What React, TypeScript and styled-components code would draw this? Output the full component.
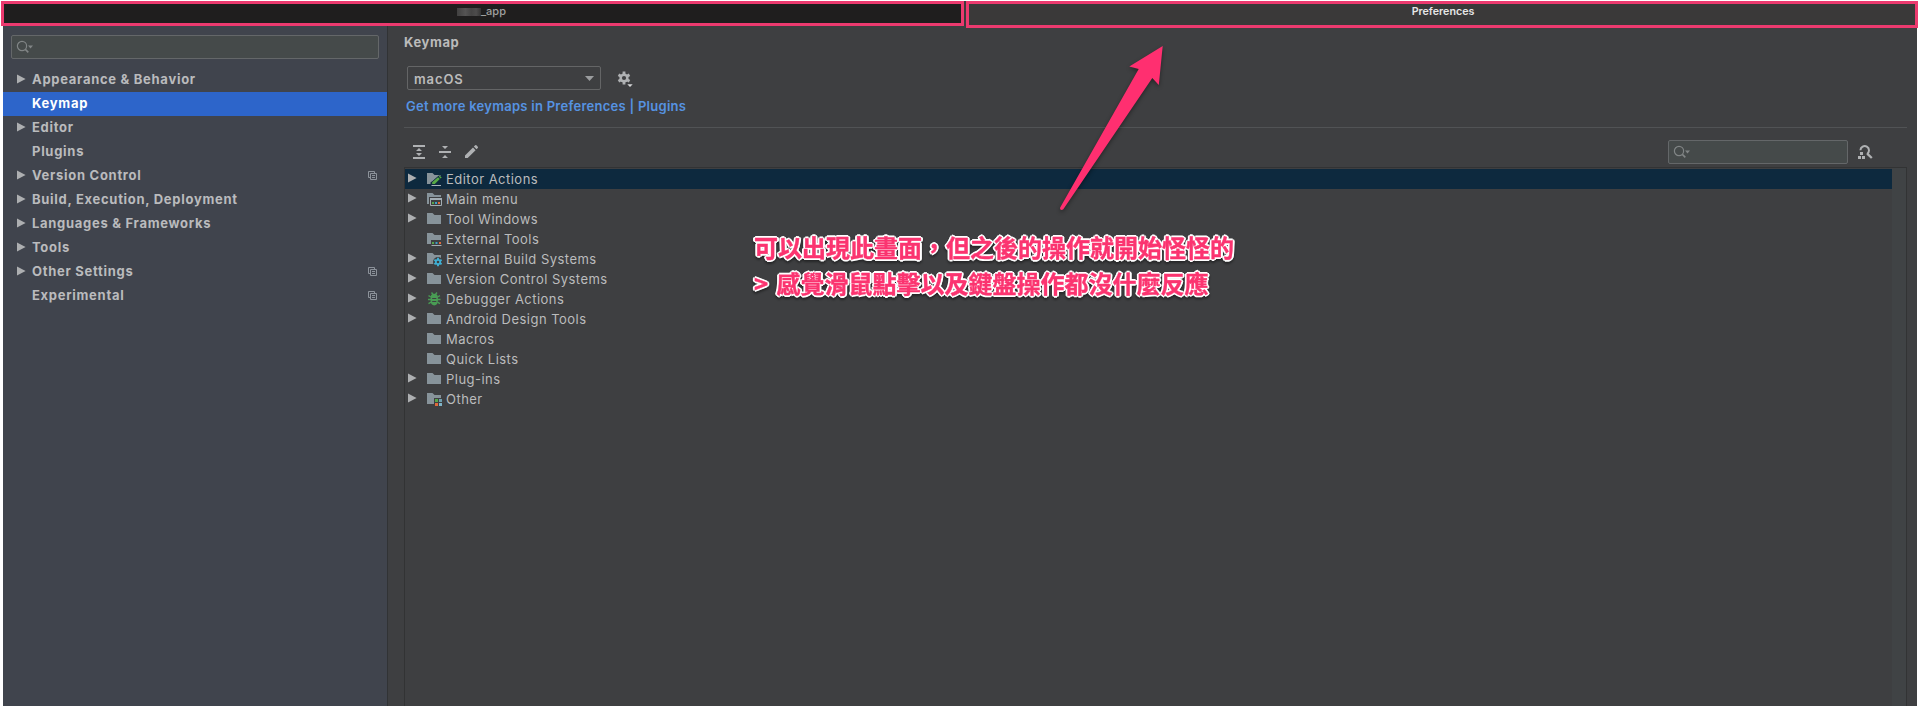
import React from "react";
import styled, { createGlobalStyle } from "styled-components";

const pink = "#ec3a6f";

const GlobalStyle = createGlobalStyle`
  * { box-sizing: border-box; }
  body { margin: 0; background: #fff; overflow: hidden; font-family: Inter, "Liberation Sans", sans-serif; }
  svg { display: block; flex: none; }
`;

const Page = styled.div`
  position: relative;
  height: 706px;
  padding: 0 2px 0 3px;
  display: flex;
  flex-direction: column;
  overflow: hidden;
`;

const TitleBar = styled.header`
  height: 26px;
  flex: none;
  display: flex;
  gap: 2px;
  align-items: flex-start;
  padding-top: 1px;
  margin: 0 -2px 0 -2px;
`;

const WindowTab = styled.div<{ $active?: boolean }>`
  width: ${(p) => (p.$active ? "952px" : "963px")};
  height: ${(p) => (p.$active ? 27 : 25)}px;
  position: relative;
  z-index: 1;
  flex: none;
  border: 3px solid ${pink};
  box-shadow: ${(p) => (p.$active ? "none" : "2px 0 0 #3e3a3c")};
  background: ${(p) => (p.$active ? "#3a3939" : "#1f1e1e")};
  color: ${(p) => (p.$active ? "#e6e6e6" : "#a0a0a0")};
  font-size: ${(p) => (p.$active ? 10.7 : 11)}px;
  font-weight: ${(p) => (p.$active ? 600 : 500)};
  line-height: 15px;
  padding-left: ${(p) => (p.$active ? 2 : 0)}px;
  display: flex;
  justify-content: center;
`;

const Redacted = styled.span`
  width: 24px;
  height: 8px;
  margin: 4px 0 0 -2px;
  background: linear-gradient(90deg, #414040, #555454 35%, #454444 60%, #4d4c4c 80%, #353434);
`;

const Body = styled.div`
  flex: 1;
  display: flex;
  min-height: 0;
`;

const Sidebar = styled.aside`
  width: 385px;
  flex: none;
  background: #40444d;
  border-right: 1px solid #313335;
  padding-top: 9px;
`;

const SearchBox = styled.div<{ $width: number }>`
  width: ${(p) => p.$width}px;
  height: 24px;
  border: 1px solid #646769;
  border-radius: 2px;
  background: #454a4a;
  padding: 4px 0 0 4px;
`;

const SidebarSearch = styled.div`
  padding: 0 0 9px 8px;
`;

const NavRow = styled.div<{ $selected?: boolean }>`
  height: 24px;
  display: flex;
  align-items: center;
  padding: 0 10px 2px 14px;
  background: ${(p) => (p.$selected ? "#2d65ca" : "transparent")};
  color: ${(p) => (p.$selected ? "#fff" : "#babbbd")};
  font-size: 13px;
  font-weight: 700;
  letter-spacing: 0.71px;
`;

const NavLabel = styled.span`
  flex: 1;
  white-space: nowrap;
`;

const ArrowSlot = styled.span<{ $width: number }>`
  width: ${(p) => p.$width}px;
  flex: none;
`;

const Content = styled.main`
  flex: 1;
  background: #3e3f41;
  padding: 8px 10px 0 16px;
  display: flex;
  flex-direction: column;
  min-width: 0;
`;

const Heading = styled.h1`
  margin: 0;
  height: 16px;
  line-height: 16px;
  font-size: 13px;
  font-weight: 700;
  letter-spacing: 0.6px;
  color: #bbbbbb;
`;

const SchemeRow = styled.div`
  display: flex;
  align-items: center;
  gap: 16px;
  margin: 16px 0 0 3px;
`;

const Select = styled.div`
  width: 194px;
  height: 24px;
  border: 1px solid #646566;
  border-radius: 2px;
  display: flex;
  align-items: center;
  justify-content: space-between;
  padding: 1px 6px 0;
  font-size: 13px;
  font-weight: 600;
  letter-spacing: 0.9px;
  color: #bbbbbb;
`;

const KeymapsLink = styled.a`
  height: 16px;
  line-height: 17px;
  margin: 8px 0 0 2px;
  font-size: 13px;
  font-weight: 600;
  letter-spacing: 0.27px;
  color: #5693e2;
  white-space: nowrap;
`;

const Divider = styled.div`
  height: 1px;
  flex: none;
  background: #515355;
  margin-top: 13px;
`;

const Toolbar = styled.div`
  display: flex;
  align-items: center;
  height: 24px;
  margin: 12px 0 3px;
  padding-left: 7px;
  flex: none;
`;

const ToolButtons = styled.div`
  display: flex;
  gap: 10px;
  flex: 1;
`;

const FindButton = styled.div`
  width: 59px;
  padding-left: 9px;
`;

const Tree = styled.div`
  flex: 1;
  border: solid #323334;
  border-width: 1px 1px 0;
  display: flex;
`;

const Rows = styled.div`
  flex: 1;
  padding-top: 1px;
`;

const ScrollTrack = styled.div`
  width: 14px;
  background: #404345;
`;

const TreeRow = styled.div<{ $selected?: boolean }>`
  height: 20px;
  display: flex;
  align-items: center;
  padding-left: 3px;
  background: ${(p) => (p.$selected ? "#0d293e" : "transparent")};
  color: #bbbcbd;
  font-size: 13px;
  letter-spacing: 0.47px;
  white-space: nowrap;
`;

const TreeArrow = styled(ArrowSlot)`
  padding-bottom: 2px;
`;

const TreeIcon = styled.span`
  width: 19px;
  flex: none;
`;

const ArrowMark = styled.svg`
  position: absolute;
  left: 1050px;
  top: 36px;
  filter: drop-shadow(0 2px 2px rgba(0, 0, 0, 0.4));
`;

const Note = styled.div`
  position: absolute;
  z-index: 2;
  left: 754px;
  top: 229px;
  font-family: "Noto Sans CJK TC", sans-serif;
  font-size: 24px;
  font-weight: 700;
  line-height: 36px;
  color: #fb3470;
  white-space: pre;
  word-spacing: 3px;
  -webkit-text-stroke: 0.4px #fb3470;
  text-shadow: 2px 0 #fff, -2px 0 #fff, 0 2px #fff, 0 -2px #fff, 1.4px 1.4px #fff, -1.4px 1.4px #fff,
    1.4px -1.4px #fff, -1.4px -1.4px #fff;
  filter: drop-shadow(0 2px 1px rgba(0, 0, 0, 0.4));
`;

const SearchIcon = () => (
  <svg width="18" height="14" viewBox="0 0 18 14" fill="none" stroke="#818586" strokeWidth="1.2">
    <circle cx="6" cy="6" r="4.6" />
    <path d="M9.3 9.4L12.3 12.4" strokeWidth="1.6" />
    <path d="M12 5.5H17L14.5 8.5Z" fill="#818586" stroke="none" />
  </svg>
);

const Triangle = () => (
  <svg width="9" height="10" viewBox="0 0 9 10">
    <path d="M0 0.4L8.6 5L0 9.6Z" fill="#adafb1" />
  </svg>
);

const CopyIcon = () => (
  <svg width="9" height="9" viewBox="0 0 9 9" fill="none" stroke="#8c929a">
    <path d="M2 6.5H0.5V0.5H6.5V2M2.5 2.5H8.5V8.5H2.5ZM4 4.5H7M4 6.5H7" />
  </svg>
);

const GearIcon = () => (
  <svg width="16" height="19" viewBox="0 -1 16 19" fill="none">
    <g transform="translate(0 0.8)">
      <g stroke="#afb1b3" strokeWidth="2.8">
        <path d="M7 0.8V13.6M1.5 4L12.5 10.4M1.5 10.4L12.5 4" />
      </g>
      <circle cx="7" cy="7.2" r="4.6" fill="#afb1b3" />
      <circle cx="7" cy="7.2" r="2.1" fill="#3e3f41" />
      <path d="M9.8 12.5H16V16.5H13L9.8 13.4Z" fill="#3e3f41" />
      <path d="M10.3 13.5H15.7L13 16.3Z" fill="#d5d6d7" />
    </g>
  </svg>
);

const ExpandIcon = () => (
  <svg width="16" height="16" viewBox="0 0 16 16" fill="#afb1b3">
    <path d="M2 1H14V3H2ZM2 13H14V15H2ZM8 4L11 7H5ZM5 9H11L8 12Z" />
  </svg>
);

const CollapseIcon = () => (
  <svg width="16" height="16" viewBox="0 0 16 16" fill="#afb1b3">
    <path d="M2 7H14V9H2ZM5 2H11L8 5ZM8 11L11 14H5Z" />
  </svg>
);

const PencilIcon = () => (
  <svg width="16" height="16" viewBox="0 0 16 16" fill="#afb1b3">
    <path d="M2 11.4L10 3.5L12.6 6.2L4.7 14.1H2ZM10.8 2.6L12.2 1.2Q12.8 0.8 13.4 1.3L14.8 2.7Q15.3 3.3 14.8 3.9L13.5 5.3Z" />
  </svg>
);

const FindActionIcon = () => (
  <svg width="17" height="16" viewBox="0 0 17 16">
    <path d="M3.4 6.2A4.3 4.3 0 1 1 10 10" fill="none" stroke="#afb1b3" strokeWidth="2" />
    <path d="M10.2 9.6L14.8 14" stroke="#afb1b3" strokeWidth="2.3" />
    <path d="M3 8H6V11H3ZM1 12H4V15H1ZM5 12H8V15H5Z" fill="#afb1b3" />
  </svg>
);

type IconKind = "folder" | "edit" | "menu" | "tools" | "build" | "bug" | "other";

const TreeGlyph = ({ kind }: { kind: IconKind }) => {
  if (kind === "bug") {
    return (
      <svg width="16" height="16" viewBox="0 0 16 16">
        <g fill="none" stroke="#499c54" strokeWidth="1.4">
          <path d="M4.5 1.5L6.5 4M10 1.5L8 4M1.5 4.7L4 6M13 4.7L10.5 6M1 8.5H13.5M1.5 12.6L4 11.2M13 12.6L10.5 11.2" />
        </g>
        <path d="M3.6 6Q4 2.7 7.25 2.7T10.9 6V10Q10.6 14.4 7.25 14.4T3.6 10Z" fill="#499c54" />
        <path d="M5.2 7.5H9.3M5.2 10.5H9.3" stroke="#3e3f41" strokeWidth="1" />
      </svg>
    );
  }
  return (
    <svg width="16" height="16" viewBox="0 0 16 16">
      <path d="M0 2H5.5L7.5 4H14V13H0Z" fill="#87939a" />
      {kind === "edit" && (
        <>
          <path d="M3.5 15.5V11.5L11.5 4.5H14.5V15.5Z" fill="#0d293e" />
          <path d="M4.5 3.9H12L4.5 10.8Z" fill="#87939a" />
          <path d="M5.2 13V11.3L11 6.2L12.8 8.1L7.8 13ZM11.8 5.5L12.8 4.7L14.7 6.5L13.6 7.4Z" fill="#57aa45" />
          <path d="M4.5 14.5H14" stroke="#a9b3b9" />
        </>
      )}
      {kind === "menu" && (
        <>
          <path d="M2 6H15V16H2Z" fill="#3e3f41" />
          <path d="M3.5 7.5H14.5V14.5H3.5Z" fill="#3e3f41" stroke="#a3adb3" />
          <path d="M3 7H15V9H3Z" fill="#a3adb3" />
          <path d="M5 11H7V13H5Z" fill="#57a64a" />
          <path d="M8 11H10V13H8Z" fill="#40a0c8" />
          <path d="M11 11H13V13H11Z" fill="#e06a3c" />
        </>
      )}
      {kind === "tools" && (
        <>
          <path d="M4 9H15V15H4Z" fill="#3e3f41" />
          <path d="M5 11H7V13H5Z" fill="#57a64a" />
          <path d="M8.5 11H10.5V13H8.5Z" fill="#40a0c8" />
          <path d="M12 11H14V13H12Z" fill="#e06a3c" />
          <path d="M4.5 14.5H14.5" stroke="#a3adb3" />
        </>
      )}
      {kind === "build" && (
        <>
          <circle cx="11" cy="11" r="5" fill="#3e3f41" />
          <path d="M11 6.8V15.2M7.4 8.9L14.6 13.1M7.4 13.1L14.6 8.9" stroke="#3fb0d5" strokeWidth="1.9" />
          <circle cx="11" cy="11" r="3" fill="#3fb0d5" />
          <circle cx="11" cy="11" r="1.3" fill="#3e3f41" />
        </>
      )}
      {kind === "other" && (
        <>
          <path d="M7 7H15V16H7Z" fill="#3e3f41" />
          <path d="M8 8H11V11H8Z" fill="#57a64a" />
          <path d="M12 8H15V11H12Z" fill="#6f9fb0" />
          <path d="M8 12H11V15H8Z" fill="#e06a3c" />
          <path d="M12 12H15V15H12Z" fill="#7fb4c8" />
        </>
      )}
    </svg>
  );
};

const navItems: { label: string; expandable?: boolean; selected?: boolean; copy?: boolean }[] = [
  { label: "Appearance & Behavior", expandable: true },
  { label: "Keymap", selected: true },
  { label: "Editor", expandable: true },
  { label: "Plugins" },
  { label: "Version Control", expandable: true, copy: true },
  { label: "Build, Execution, Deployment", expandable: true },
  { label: "Languages & Frameworks", expandable: true },
  { label: "Tools", expandable: true },
  { label: "Other Settings", expandable: true, copy: true },
  { label: "Experimental", copy: true },
];

const treeItems: { label: string; kind: IconKind; leaf?: boolean }[] = [
  { label: "Editor Actions", kind: "edit" },
  { label: "Main menu", kind: "menu" },
  { label: "Tool Windows", kind: "folder" },
  { label: "External Tools", kind: "tools", leaf: true },
  { label: "External Build Systems", kind: "build" },
  { label: "Version Control Systems", kind: "folder" },
  { label: "Debugger Actions", kind: "bug" },
  { label: "Android Design Tools", kind: "folder" },
  { label: "Macros", kind: "folder", leaf: true },
  { label: "Quick Lists", kind: "folder", leaf: true },
  { label: "Plug-ins", kind: "folder" },
  { label: "Other", kind: "other" },
];

export default function App() {
  return (
    <>
      <GlobalStyle />
      <Page>
        <TitleBar>
          <WindowTab>
            <Redacted />
            <span>_app</span>
          </WindowTab>
          <WindowTab $active>Preferences</WindowTab>
        </TitleBar>
        <Body>
          <Sidebar>
            <SidebarSearch>
              <SearchBox $width={368}>
                <SearchIcon />
              </SearchBox>
            </SidebarSearch>
            {navItems.map((item) => (
              <NavRow key={item.label} $selected={item.selected}>
                <ArrowSlot $width={15}>{item.expandable && <Triangle />}</ArrowSlot>
                <NavLabel>{item.label}</NavLabel>
                {item.copy && <CopyIcon />}
              </NavRow>
            ))}
          </Sidebar>
          <Content>
            <Heading>Keymap</Heading>
            <SchemeRow>
              <Select>
                macOS
                <svg width="9" height="5" viewBox="0 0 9 5">
                  <path d="M0 0H9L4.5 5Z" fill="#9b9d9f" />
                </svg>
              </Select>
              <GearIcon />
            </SchemeRow>
            <KeymapsLink>Get more keymaps in Preferences | Plugins</KeymapsLink>
            <Divider />
            <Toolbar>
              <ToolButtons>
                <ExpandIcon />
                <CollapseIcon />
                <PencilIcon />
              </ToolButtons>
              <SearchBox $width={180}>
                <SearchIcon />
              </SearchBox>
              <FindButton>
                <FindActionIcon />
              </FindButton>
            </Toolbar>
            <Tree>
              <Rows>
                {treeItems.map((item, i) => (
                  <TreeRow key={item.label} $selected={i === 0}>
                    <TreeArrow $width={19}>{!item.leaf && <Triangle />}</TreeArrow>
                    <TreeIcon>
                      <TreeGlyph kind={item.kind} />
                    </TreeIcon>
                    {item.label}
                  </TreeRow>
                ))}
              </Rows>
              <ScrollTrack />
            </Tree>
          </Content>
        </Body>
        <ArrowMark width="124" height="184" viewBox="1050 36 124 184">
          <path
            d="M1162.7 46L1129.3 66.5L1138.7 69L1060.2 207.5Q1059.6 210 1061.5 210T1064 208.2L1152.3 78L1158.8 85Z"
            fill="#ff2f70"
          />
        </ArrowMark>
        <Note>{"可以出現此畫面，但之後的操作就開始怪怪的\n> 感覺滑鼠點擊以及鍵盤操作都沒什麼反應"}</Note>
      </Page>
    </>
  );
}
